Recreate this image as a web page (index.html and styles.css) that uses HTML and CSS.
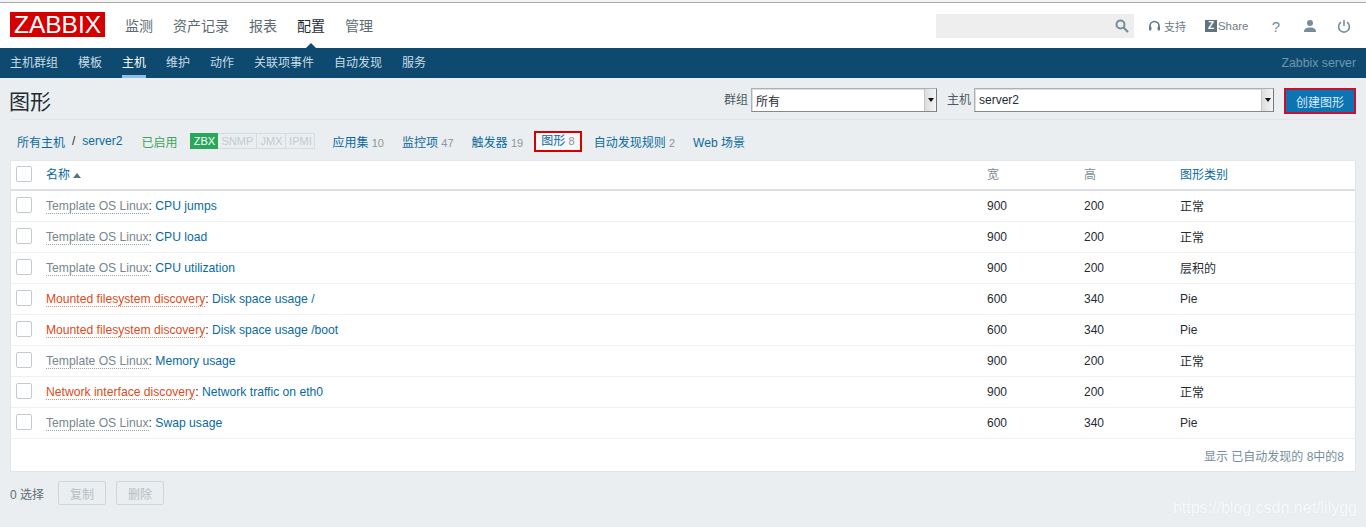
FILE: index.html
```html
<!DOCTYPE html>
<html lang="zh">
<head>
<meta charset="utf-8">
<title>图形</title>
<link rel="stylesheet" href="styles.css">
</head>
<body>
<header class="topbar">
  <div class="logo">ZABBIX</div>
  <nav class="mainnav">
    <a>监测</a><a>资产记录</a><a>报表</a><a class="active">配置</a><a>管理</a>
  </nav>
  <div class="tools">
    <div class="search">
      <svg class="search-ic" width="14" height="14" viewBox="0 0 14 14"><circle cx="5.5" cy="5.5" r="4" fill="none" stroke="#768d99" stroke-width="2"/><path d="M8.5 8.5L13 13" stroke="#768d99" stroke-width="2.2"/></svg>
    </div>
    <a class="tool t-support"><svg width="13" height="13" viewBox="0 0 13 13"><path d="M2 8V6a4.5 4.5 0 0 1 9 0v2" fill="none" stroke="#5f7683" stroke-width="1.6"/><rect x="1" y="6.5" width="2.4" height="4" rx="1" fill="#5f7683"/><rect x="9.6" y="6.5" width="2.4" height="4" rx="1" fill="#5f7683"/></svg>支持</a>
    <a class="tool t-share"><span class="zbox">Z</span>Share</a>
    <a class="tool t-help">?</a>
    <a class="tool t-user"><svg width="14" height="14" viewBox="0 0 14 14"><circle cx="7" cy="4" r="3" fill="#768d99"/><path d="M1 13c0-3.500 2.500-4.500 6-4.500s6 1 6 4.500z" fill="#768d99"/></svg></a>
    <a class="tool t-power"><svg width="14" height="14" viewBox="0 0 14 14"><path d="M4 3.200a5.400 5.400 0 1 0 6 0" fill="none" stroke="#768d99" stroke-width="1.600"/><path d="M7 1v6" stroke="#768d99" stroke-width="1.600"/></svg></a>
  </div>
</header>
<nav class="subnav">
  <a>主机群组</a><a>模板</a><a class="active">主机</a><a>维护</a><a>动作</a><a>关联项事件</a><a>自动发现</a><a>服务</a>
  <span class="server">Zabbix server</span>
</nav>
<main>
  <div class="titlebar">
    <h1>图形</h1>
    <div class="filters">
      <label>群组</label>
      <div class="select s-group"><span>所有</span><i class="arrow"></i></div>
      <label>主机</label>
      <div class="select s-host"><span>server2</span><i class="arrow"></i></div>
      <button class="create">创建图形</button>
    </div>
  </div>
  <div class="crumbs">
    <a>所有主机</a><span class="slash">/</span><a>server2</a>
    <span class="enabled">已启用</span>
    <span class="avail"><b>ZBX</b><em class="e-snmp">SNMP</em><em class="e-jmx">JMX</em><em class="e-ipmi">IPMI</em></span>
    <a class="c-item">应用集 <small>10</small></a>
    <a class="c-item">监控项 <small>47</small></a>
    <a class="c-item">触发器 <small>19</small></a>
    <a class="c-item current">图形 <small>8</small></a>
    <a class="c-item">自动发现规则 <small>2</small></a>
    <a class="c-item">Web 场景</a>
  </div>
  <section class="panel">
    <table>
      <thead>
        <tr>
          <th class="c-check"><i class="check"></i></th>
          <th class="c-name"><a>名称</a><i class="sort"></i></th>
          <th class="c-w">宽</th>
          <th class="c-h">高</th>
          <th class="c-t"><a>图形类别</a></th>
        </tr>
      </thead>
      <tbody>
        <tr><td><i class="check"></i></td><td class="name"><a class="tpl">Template OS Linux</a>: <a>CPU jumps</a></td><td>900</td><td>200</td><td>正常</td></tr>
        <tr><td><i class="check"></i></td><td class="name"><a class="tpl">Template OS Linux</a>: <a>CPU load</a></td><td>900</td><td>200</td><td>正常</td></tr>
        <tr><td><i class="check"></i></td><td class="name"><a class="tpl">Template OS Linux</a>: <a>CPU utilization</a></td><td>900</td><td>200</td><td>层积的</td></tr>
        <tr><td><i class="check"></i></td><td class="name"><a class="disc">Mounted filesystem discovery</a>: <a>Disk space usage /</a></td><td>600</td><td>340</td><td>Pie</td></tr>
        <tr><td><i class="check"></i></td><td class="name"><a class="disc">Mounted filesystem discovery</a>: <a>Disk space usage /boot</a></td><td>600</td><td>340</td><td>Pie</td></tr>
        <tr><td><i class="check"></i></td><td class="name"><a class="tpl">Template OS Linux</a>: <a>Memory usage</a></td><td>900</td><td>200</td><td>正常</td></tr>
        <tr><td><i class="check"></i></td><td class="name"><a class="disc">Network interface discovery</a>: <a>Network traffic on eth0</a></td><td>900</td><td>200</td><td>正常</td></tr>
        <tr><td><i class="check"></i></td><td class="name"><a class="tpl">Template OS Linux</a>: <a>Swap usage</a></td><td>600</td><td>340</td><td>Pie</td></tr>
      </tbody>
    </table>
    <div class="paging">显示 已自动发现的 8中的8</div>
  </section>
  <div class="actions">
    <span class="selected">0 选择</span>
    <button class="ghost">复制</button>
    <button class="ghost">删除</button>
  </div>
</main>
<div class="watermark">https://blog.csdn.net/lilygg</div>
</body>
</html>
```
FILE: styles.css
```css
* { box-sizing: border-box; }
html, body { margin: 0; height: 527px; overflow: hidden; }
body {
  background: #ebeef0;
  font: 12px "Liberation Sans", "Noto Sans CJK SC", sans-serif;
  color: #1f2c33;
  position: relative;
}
a { color: #0a6a9f; text-decoration: none; }

.topbar {
  height: 48px;
  margin: 0;
  padding: 2px 10px 0;
  background: #fff;
  display: flex;
  align-items: center;
  background-image: linear-gradient(#f4f4f4 0 2px, #a8a8a8 2px 3px, #fff 3px);
}
.logo {
  width: 95px;
  height: 25px;
  margin-top: -1px;
  background: #d40000;
  color: #fff;
  font-size: 24.5px;
  line-height: 25px;
  text-align: center;
}
.mainnav { display: flex; gap: 20px; margin-left: 20px; margin-top: 2px; font-size: 14px; }
.mainnav a { color: #5c6a72; position: relative; line-height: 20px; }
.mainnav a.active { color: #1f2c33; }
.mainnav a.active::after {
  content: "";
  position: absolute;
  left: 7px;
  bottom: -14px;
  border: 7px solid transparent;
  border-top: 0;
  border-bottom-color: #0e4a6f;
}
.tools { margin-left: auto; display: flex; align-items: center; margin-top: 2px; }
.tool { color: #6d7b84; font-size: 11px; display: flex; align-items: center; }
.search {
  width: 198px;
  height: 24px;
  margin-right: 14px;
  background: #eeeeee;
  display: flex;
  justify-content: flex-end;
  align-items: center;
  padding-right: 5px;
}
.t-support { width: 57px; gap: 3px; }
.t-share { width: 60px; font-size: 11.4px; }
.zbox {
  width: 12px; height: 12px; margin-right: 1px;
  background: #5e737e; color: #fff;
  font-size: 10px; font-weight: bold; line-height: 12px; text-align: center;
}
.t-help { width: 28px; font-size: 15px; color: #768d99; justify-content: center; padding-right: 6px; }
.t-user { width: 33px; justify-content: center; }
.t-power { width: 30px; justify-content: flex-end; padding-right: 5px; }

.subnav {
  height: 30px;
  background: #0e4a6f;
  padding: 0 10px;
  display: flex;
  gap: 20px;
  align-items: stretch;
}
.subnav a { color: #c7dbe8; line-height: 30px; position: relative; }
.subnav a.active { color: #fff; }
.subnav a.active::after {
  content: "";
  position: absolute; left: 0; right: 0; bottom: 0; height: 3px;
  background: #8dc0e8;
}
.server { margin-left: auto; color: #6f97b0; line-height: 30px; font-size: 12.3px; }

.titlebar {
  height: 42px;
  margin: 0 10px;
  border-bottom: 1px solid #dfe4e7;
  display: flex;
  align-items: flex-start;
  justify-content: space-between;
}
h1 { margin: 0 0 0 -1px; font-size: 21px; font-weight: normal; line-height: 24px; padding-top: 12px; height: 40px; color: #1f2c33; }
.filters { display: flex; align-items: flex-start; padding-top: 10px; color: #4b5a62; }
.filters label { margin-right: 3px; line-height: 24px; }
.select {
  height: 24px;
  background: #fff;
  border: 1px solid #a9b2b8;
  border-right-color: #777;
  border-bottom-color: #888;
  box-shadow: inset 1px 1px 0 #ddd;
  display: flex;
  align-items: center;
  padding-left: 4px;
  color: #1f2c33;
  position: relative;
}
.s-group { width: 186px; margin-right: 10px; }
.s-host { width: 300px; margin-right: 10px; }
.arrow {
  position: absolute; right: 0; top: 0; bottom: 0; width: 12px;
  background: linear-gradient(90deg, #ddd, #f4f4f4);
  border-left: 1px solid #c5c5c5;
}
.arrow::after {
  content: ""; position: absolute; left: 3px; top: 9px;
  border: 3px solid transparent; border-bottom: 0; border-top: 4px solid #111;
}
.create {
  width: 72px; height: 26px;
  background: #0c74b2;
  border: 2px solid #c8102e;
  color: #d8ecf8;
  font: inherit;
  padding: 0;
}

.crumbs {
  height: 40px;
  padding: 2px 0 0 17px;
  display: flex;
  align-items: center;
}
.slash { margin: 0 7px; color: #1f2c33; }
.enabled { margin-left: 19px; color: #3da35d; }
.avail { display: flex; height: 16px; margin-left: 13px; font-size: 11px; line-height: 16px; border-radius: 2px; }
.avail b { width: 28px; background: #2aa85a; color: #fff; font-weight: normal; text-align: center; }
.avail em {
  font-style: normal; color: #c2cbd0; text-align: center;
  border: 1px solid #d7dcdf; border-left: 0; line-height: 14px;
}
.e-snmp { width: 39px; }
.e-jmx { width: 29px; }
.e-ipmi { width: 29px; }
.c-item { margin-left: 18px; }
.avail + .c-item { margin-left: 17px; }
.c-item small { font-size: 11px; color: #8b979d; }
.c-item.current {
  background: #f5f7f8;
  border: 2px solid #d40000;
  height: 21px;
  line-height: 17px;
  padding: 0 5px;
  margin-left: 11px;
}
.c-item.current + .c-item { margin-left: 12px; }

.panel {
  margin: 0 10px;
  background: #fff;
  border: 1px solid #e2e6e8;
  border-top-color: #e6e9eb;
  height: 312px;
}
table { width: 100%; border-collapse: collapse; table-layout: fixed; }
th { height: 29px; border-bottom: 2px solid #dce0e3; font-weight: normal; text-align: left; color: #7e8b92; padding: 0 0 3px; }
td { height: 31px; border-bottom: 1px solid #eef0f2; padding: 0; color: #1f2c33; }
.name { font-size: 12.15px; }
.c-check { width: 35px; padding-left: 5px; }
td:first-child { padding-left: 5px; }
.c-w { width: 97px; }
.c-h { width: 96px; }
.c-t { width: 175px; }
.c-name { width: auto; }
.check {
  display: block; width: 16px; height: 16px;
  border: 1px solid #c4cbcf; border-radius: 2px; background: #fff;
}
tbody .check { margin-top: -1px; }
.sort {
  display: inline-block; margin-left: 3px; vertical-align: 1px;
  border: 4px solid transparent; border-top: 0; border-bottom: 5px solid #5d7483;
}
.tpl { color: #78868d; border-bottom: 1px dotted #9aa5ab; }
.disc { color: #dd4b20; border-bottom: 1px dotted #dd8b70; }
td a:not([class]) { color: #0a6a9f; }
.paging { height: 32px; text-align: right; padding: 8px 11px 0 0; color: #768d99; }

.actions { display: flex; align-items: center; padding: 9px 10px 0; }
.selected { color: #5f6d75; margin-right: 14px; }
.ghost {
  width: 48px; height: 24px; margin-right: 10px; padding: 0;
  background: #ebeef0;
  border: 1px solid #d0d5d8;
  border-radius: 2px;
  color: #b5bec3;
  font: inherit;
}
.watermark {
  position: absolute;
  right: 9px;
  top: 499px;
  font-size: 16px;
  color: #fff;
  opacity: 0.7;
  text-shadow: 0 0 1px #d5dade;
}
```
